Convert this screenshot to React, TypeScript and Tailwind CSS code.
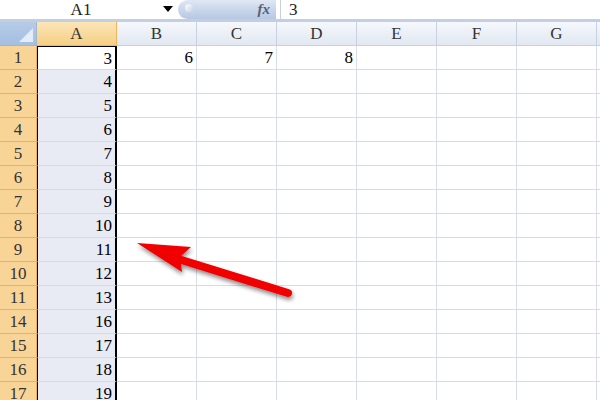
import React from 'react';

const cols = ['A', 'B', 'C', 'D', 'E', 'F', 'G', 'H'];
const rowNums = [1, 2, 3, 4, 5, 6, 7, 8, 9, 10, 11, 14, 15, 16, 17];
const colA = [3, 4, 5, 6, 7, 8, 9, 10, 11, 12, 13, 16, 17, 18, 19];
const firstRow: Record<string, string> = { B: '6', C: '7', D: '8' };

const serif = "font-['Liberation_Serif','DejaVu_Serif',serif]";

function FormulaBar() {
  return (
    <div className="flex h-[22px] bg-white border-b-[3px] border-[#c3cfe0]">
      <div className="relative flex w-[178px] items-center justify-center">
        <span className={`${serif} text-[17px] leading-none text-[#222] -ml-[16px]`}>A1</span>
        <span className="absolute left-[163px] top-[6px] h-0 w-0 border-x-[5px] border-t-[6px] border-x-transparent border-t-black" />
      </div>
      <div className="relative flex w-[98px] items-center justify-end rounded-l-full bg-gradient-to-b from-[#dfe8f5] via-[#c9d7eb] to-[#b7c8e2] pr-[6px]">
        <span className="absolute left-[7px] top-[4px] h-[8px] w-[8px] rounded-full bg-gradient-to-br from-white to-[#c8d3e3]" />
        <span className={`${serif} text-[15px] font-bold italic leading-none text-[#5a6070]`}>fx</span>
      </div>
      <div className="w-[5px] bg-white border-r border-[#c7cfdb]" />
      <div className={`${serif} flex items-center pl-[8px] text-[17px] leading-none text-[#222]`}>3</div>
    </div>
  );
}

function HeaderRow() {
  return (
    <div className="flex h-[24px]">
      <div className="relative w-[37px] shrink-0 border-r border-b border-[#9eb6ce] bg-gradient-to-b from-[#b5cbe8] to-[#a5bfe2]">
        <svg className="absolute right-[3px] bottom-[3px]" width="14" height="14" viewBox="0 0 14 14">
          <polygon points="14,0 14,14 0,14" fill="#e4ecf7" />
        </svg>
      </div>
      {cols.map((c) => (
        <div
          key={c}
          className={`${serif} flex w-[80px] shrink-0 items-center justify-center border-r border-b text-[17px] leading-none ${
            c === 'A'
              ? 'border-[#f2b35a] bg-gradient-to-b from-[#fbe5b6] to-[#f6cf85] text-[#333]'
              : 'border-[#c5d2e3] bg-gradient-to-b from-[#f5f8fc] to-[#e2e8f1] text-[#333]'
          }`}
        >
          {c === 'H' ? '' : c}
        </div>
      ))}
    </div>
  );
}

function Row({ num, a, idx }: { num: number; a: number; idx: number }) {
  return (
    <div className="flex h-[24px]">
      <div className={`${serif} flex w-[37px] shrink-0 items-center justify-center border-r border-b border-[#f0b155] bg-[#f8d597] text-[17px] leading-none text-[#333]`}>
        {num}
      </div>
      {cols.map((c) => {
        if (c === 'A') {
          return (
            <div
              key={c}
              className={`${serif} flex w-[80px] shrink-0 items-center justify-end border-l-[1px] border-r-[2px] border-r-black border-l-black pr-[3px] text-[17px] leading-none text-black ${
                idx === 0 ? 'bg-white border-t border-t-black border-b border-b-[#d4dae8]' : 'bg-[#e8eaf4] border-b border-b-[#d4dae8]'
              }`}
            >
              {a}
            </div>
          );
        }
        return (
          <div
            key={c}
            className={`${serif} flex w-[80px] shrink-0 items-center justify-end border-r border-b border-[#d6dce8] bg-white pr-[3px] text-[17px] leading-none text-black`}
          >
            {idx === 0 ? firstRow[c] ?? '' : ''}
          </div>
        );
      })}
    </div>
  );
}

export default function App() {
  return (
    <div className="relative h-[400px] w-[600px] overflow-hidden bg-white">
      <FormulaBar />
      <HeaderRow />
      {rowNums.map((n, i) => (
        <Row key={n} num={n} a={colA[i]} idx={i} />
      ))}
      <svg className="absolute left-0 top-0" width="600" height="400" viewBox="0 0 600 400">
        <defs>
          <filter id="sh" x="-20%" y="-20%" width="140%" height="140%">
            <feDropShadow dx="1" dy="3" stdDeviation="2" floodColor="#000" floodOpacity="0.45" />
          </filter>
        </defs>
        <g filter="url(#sh)">
          <line x1="175" y1="258" x2="288" y2="293" stroke="#f00000" strokeWidth="8" strokeLinecap="round" />
          <polygon points="137,243 191,247 180,257 182,272" fill="#f00000" />
        </g>
      </svg>
    </div>
  );
}
